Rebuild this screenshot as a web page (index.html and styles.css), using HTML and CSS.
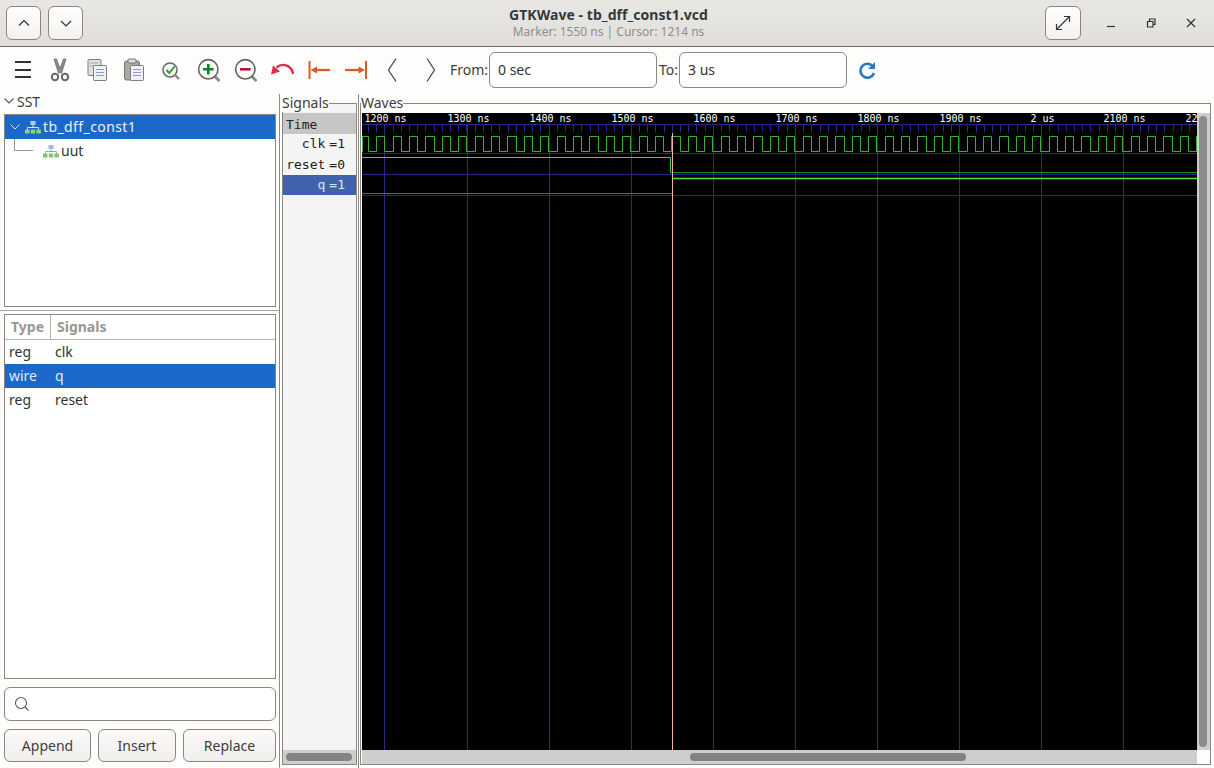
FILE: index.html
```html
<!DOCTYPE html>
<html lang="en">
<head>
  <meta charset="UTF-8">
  <title>GTKWave - tb_dff_const1.vcd</title>
  <link rel="stylesheet" href="styles.css">
</head>
<body>
  <header class="titlebar">
    <div class="titlebar-side">
      <button class="head-btn"><svg width="16" height="16" viewBox="0 0 16 16"><polyline points="3,10.5 8,5.5 13,10.5" class="ic-thin"/></svg></button>
      <button class="head-btn"><svg width="16" height="16" viewBox="0 0 16 16"><polyline points="3,6 8,11 13,6" class="ic-thin"/></svg></button>
    </div>
    <div class="title-text">
      <div class="title-main">GTKWave - tb_dff_const1.vcd</div>
      <div class="title-sub">Marker: 1550 ns | Cursor: 1214 ns</div>
    </div>
    <div class="titlebar-side right">
      <button class="head-btn expand"><svg width="16" height="16" viewBox="0 0 16 16"><path d="M1.5 14.5 L14.5 1.5 M9 1.5 H14.5 V7 M1.5 9 V14.5 H7" class="ic-thin"/></svg></button>
      <div class="win-btn"><svg width="10" height="10" viewBox="0 0 10 10"><path d="M1 8.5 H9" class="ic-win"/></svg></div>
      <div class="win-btn"><svg width="10" height="10" viewBox="0 0 10 10"><path d="M1.5 3.5 H7 V9 H1.5 Z M3.5 3 V1 H9 V6.5 H7.5" class="ic-win"/></svg></div>
      <div class="win-btn"><svg width="10" height="10" viewBox="0 0 10 10"><path d="M1 1 L9 9 M9 1 L1 9" class="ic-win"/></svg></div>
    </div>
  </header>

  <div class="toolbar">
    <div class="tool">
      <svg width="24" height="24" viewBox="0 0 24 24"><path d="M4 4 H20 M4 12 H20 M4 19 H20" fill="none" stroke="#2e3436" stroke-width="2"/></svg>
    </div>
    <div class="tool">
      <svg width="24" height="24" viewBox="0 0 24 24">
        <path d="M6 1 L8.5 1 L13 13 L10.5 15.5 Z M18 1 L15.5 1 L11 13 L13.5 15.5 Z" fill="#8b8e88" stroke="#5f625e" stroke-width=".7"/>
        <circle cx="7" cy="19" r="3.2" fill="none" stroke="#666" stroke-width="2"/>
        <circle cx="17" cy="19" r="3.2" fill="none" stroke="#666" stroke-width="2"/>
      </svg>
    </div>
    <div class="tool">
      <svg width="24" height="24" viewBox="0 0 24 24">
        <rect x="3" y="1.5" width="13" height="16" rx="1" fill="#dfdfdc" stroke="#808080"/>
        <path d="M5 5 H13 M5 8 H13" stroke="#a5a5a5"/>
        <rect x="8.5" y="7.5" width="13" height="15" rx="1" fill="#f0f0f6" stroke="#7f7f7f"/>
        <path d="M11 11.5 H19 M11 14.5 H19 M11 17.5 H19" stroke="#8f9bd0"/>
      </svg>
    </div>
    <div class="tool">
      <svg width="24" height="24" viewBox="0 0 24 24">
        <rect x="2.5" y="3" width="15" height="19" rx="2" fill="#a9a9a4" stroke="#747470"/>
        <rect x="6" y="1" width="8" height="4" rx="1" fill="#dcdcd8" stroke="#747470"/>
        <rect x="8.5" y="7.5" width="13" height="15" rx="1" fill="#f0f0f6" stroke="#7f7f7f"/>
        <path d="M11 11.5 H19 M11 14.5 H19 M11 17.5 H19" stroke="#8f9bd0"/>
      </svg>
    </div>
    <div class="tool">
      <svg width="24" height="24" viewBox="0 0 24 24">
        <path d="M16.5 17.5 L20 21" stroke="#888" stroke-width="2.4"/>
        <circle cx="11" cy="12" r="7" fill="#f6f6f4" stroke="#666" stroke-width="1.5"/>
        <path d="M7.5 12 L10.3 15 L15.5 8.5" fill="none" stroke="#2f9e3f" stroke-width="2"/>
      </svg>
    </div>
    <div class="tool">
      <svg width="24" height="24" viewBox="0 0 24 24">
        <path d="M18.5 18 L23.5 23" stroke="#8a8a8a" stroke-width="3"/>
        <circle cx="12.3" cy="11.3" r="9.7" fill="#fafafa" stroke="#5f635f" stroke-width="1.6"/>
        <path d="M7 11.3 H17.6 M12.3 6 V16.6" stroke="#14812a" stroke-width="2.6"/>
      </svg>
    </div>
    <div class="tool">
      <svg width="24" height="24" viewBox="0 0 24 24">
        <path d="M18.5 18 L23.5 23" stroke="#8a8a8a" stroke-width="3"/>
        <circle cx="12.3" cy="11.3" r="9.7" fill="#fafafa" stroke="#5f635f" stroke-width="1.6"/>
        <path d="M7 11.3 H17.6" stroke="#b3162f" stroke-width="2.6"/>
      </svg>
    </div>
    <div class="tool">
      <svg width="24" height="24" viewBox="0 0 24 24">
        <path d="M23 16 C22 8 13 4 6.5 9.5" fill="none" stroke="#dc2c46" stroke-width="2.4"/>
        <path d="M1 16.5 L3 7.5 L10 13.5 Z" fill="#dc2c46"/>
      </svg>
    </div>
    <div class="tool">
      <svg width="24" height="24" viewBox="0 0 24 24">
        <path d="M2.5 3 V21" stroke="#df5a22" stroke-width="2"/>
        <path d="M8 12 H23" stroke="#df5a22" stroke-width="2.2"/>
        <path d="M3.5 12 L10 8.5 V15.5 Z" fill="#df5a22"/>
      </svg>
    </div>
    <div class="tool">
      <svg width="24" height="24" viewBox="0 0 24 24">
        <path d="M22 3 V21" stroke="#df5a22" stroke-width="2"/>
        <path d="M1 12 H16" stroke="#df5a22" stroke-width="2.2"/>
        <path d="M21 12 L14.5 8.5 V15.5 Z" fill="#df5a22"/>
      </svg>
    </div>
    <div class="tool">
      <svg width="24" height="24" viewBox="0 0 24 24"><polyline points="15,0.5 7.5,12 15,23.5" class="ic-chev"/></svg>
    </div>
    <div class="tool">
      <svg width="24" height="24" viewBox="0 0 24 24"><polyline points="9,0.5 16.5,12 9,23.5" class="ic-chev"/></svg>
    </div>
    <label class="range-label">From:</label>
    <input class="range-input" value="0 sec">
    <label class="range-label to">To:</label>
    <input class="range-input" value="3 us">
    <div class="tool reload">
      <svg width="24" height="24" viewBox="0 0 24 24">
        <path d="M18 8.5 A7 7 0 1 0 19 15" fill="none" stroke="#2b78c4" stroke-width="2.6"/>
        <path d="M20 4 V11 H13 Z" fill="#2b78c4"/>
      </svg>
    </div>
  </div>

  <main class="panes">
    <section class="sst">
      <div class="sst-head">
        <svg width="10" height="6" viewBox="0 0 10 6"><polyline points="0.5,0.5 5,5 9.5,0.5" class="ic-gray"/></svg>
        <span>SST</span>
      </div>
      <div class="tree box">
        <div class="tree-row selected">
          <svg class="tree-chev" width="10" height="6" viewBox="0 0 10 6"><polyline points="0.5,0.5 5,5 9.5,0.5" fill="none" stroke="#cfe0f7" stroke-width="1"/></svg>
          <svg width="16" height="13" viewBox="0 0 16 13">
            <rect x="5.5" y="0" width="5" height="4" fill="#b5cdea"/>
            <path d="M8 4 V6.5 M2.5 8.5 V6.5 H13.5 V8.5" fill="none" stroke="#d8e5f5"/>
            <rect x="0" y="8.5" width="4.5" height="4" fill="#8fd07a"/><rect x="5.7" y="8.5" width="4.5" height="4" fill="#8fd07a"/><rect x="11.4" y="8.5" width="4.5" height="4" fill="#8fd07a"/>
          </svg>
          <span class="tree-top">tb_dff_const1</span>
        </div>
        <div class="tree-row">
          <span class="tree-link"></span>
          <svg width="16" height="13" viewBox="0 0 16 13">
            <rect x="5.5" y="0" width="5" height="4" fill="#9cb9de"/>
            <path d="M8 4 V6.5 M2.5 8.5 V6.5 H13.5 V8.5" fill="none" stroke="#9aa"/>
            <rect x="0" y="8.5" width="4.5" height="4" fill="#86c46f"/><rect x="5.7" y="8.5" width="4.5" height="4" fill="#86c46f"/><rect x="11.4" y="8.5" width="4.5" height="4" fill="#86c46f"/>
          </svg>
          <span>uut</span>
        </div>
      </div>
      <div class="pane-grip"></div>
      <div class="list box">
        <div class="list-row list-head"><span>Type</span><span>Signals</span></div>
        <div class="list-row"><span>reg</span><span>clk</span></div>
        <div class="list-row selected"><span>wire</span><span>q</span></div>
        <div class="list-row"><span>reg</span><span>reset</span></div>
      </div>
      <div class="search">
        <svg width="16" height="16" viewBox="0 0 16 16"><circle cx="7" cy="7" r="5.5" class="ic-gray"/><path d="M11 11 L14.5 14.5" class="ic-gray"/></svg>
      </div>
      <div class="actions">
        <button class="action-btn">Append</button>
        <button class="action-btn">Insert</button>
        <button class="action-btn">Replace</button>
      </div>
    </section>

    <div class="divider"></div>

    <fieldset class="frame signals">
      <legend>Signals</legend>
      <div class="sig-list">
        <div class="sig-row time"><span>Time</span></div>
        <div class="sig-row"><span>clk</span><span class="sig-val">=1</span></div>
        <div class="sig-row"><span>reset</span><span class="sig-val">=0</span></div>
        <div class="sig-row active"><span>q</span><span class="sig-val">=1</span></div>
      </div>
      <div class="hscroll"><div class="thumb sig-thumb"></div></div>
    </fieldset>

    <div class="divider"></div>

    <fieldset class="frame waves">
      <legend>Waves</legend>
      <div class="wave-body">
        <svg id="wave" class="wave" width="835" height="637" viewBox="0 0 835 637"></svg>
        <div class="vscroll"><div class="vthumb"></div></div>
      </div>
      <div class="wave-foot">
        <div class="hscroll wave-hscroll"><div class="thumb wave-thumb"></div></div>
        <div class="corner"></div>
      </div>
    </fieldset>
  </main>

  <script src="wave.js"></script>
</body>
</html>
```

FILE: styles.css
```css
html, body {
  height: 100%;
}

body {
  margin: 0;
  display: flex;
  flex-direction: column;
  overflow: hidden;
  background: #fdfdfc;
  color: #2e3436;
  font-family: "Noto Sans", sans-serif;
  font-size: 14px;
}

button {
  font: inherit;
  color: inherit;
}

svg {
  display: block;
  flex: none;
}

.ic-thin { fill: none; stroke: #2e3436; stroke-width: 1.2; }
.ic-win { fill: none; stroke: #2e3436; stroke-width: 1.2; }
.ic-chev { fill: none; stroke: #4a4a4a; stroke-width: 1.3; }
.ic-gray { fill: none; stroke: #555; stroke-width: 1.1; }

/* title bar */
.titlebar {
  display: flex;
  align-items: center;
  height: 46px;
  flex: none;
  padding: 0 3px 0 6px;
  background: linear-gradient(#e9e7e4, #e1dfdc);
  border-bottom: 1px solid #6d6762;
}

.titlebar-side {
  flex: 1 1 0;
  display: flex;
  align-items: center;
  gap: 7px;
}

.titlebar-side.right {
  justify-content: flex-end;
  gap: 0;
}

.head-btn {
  width: 35px;
  height: 34px;
  padding: 0;
  display: flex;
  align-items: center;
  justify-content: center;
  border: 1px solid #8c8680;
  border-radius: 6px;
  background: linear-gradient(#ffffff, #f3f1ef);
}

.head-btn.expand {
  width: 36px;
  margin-right: 10px;
}

.win-btn {
  width: 40px;
  height: 34px;
  display: flex;
  align-items: center;
  justify-content: center;
}

.title-text {
  text-align: center;
  white-space: nowrap;
}

.title-main {
  font-size: 14px;
  font-weight: 700;
  line-height: 17px;
  letter-spacing: .05px;
  color: #33383a;
}

.title-sub {
  margin-top: 1px;
  font-size: 12px;
  line-height: 16px;
  color: #8e8e8c;
}

/* toolbar */
.toolbar {
  box-sizing: border-box;
  display: flex;
  align-items: center;
  flex: none;
  height: 47px;
  padding: 0 0 2px 4px;
}

.tool {
  width: 37px;
  display: flex;
  justify-content: center;
}

.tool.reload {
  margin-left: 1px;
}

.range-label {
  margin-left: 2px;
  width: 39px;
  font-size: 14px;
  color: #3d3d3d;
}

.range-label.to {
  width: 20px;
}

.range-input {
  box-sizing: border-box;
  width: 168px;
  height: 36px;
  padding: 0 8px;
  border: 1px solid #8c8680;
  border-radius: 6px;
  background: #fff;
  color: #2e3436;
  font-family: inherit;
  font-size: 14px;
}

/* panes */
.panes {
  flex: 1;
  display: flex;
  min-height: 0;
}

.divider {
  flex: none;
  width: 1px;
  background: #8f8a84;
}

.box {
  border: 1px solid #8c8680;
  background: #fff;
}

.sst {
  box-sizing: border-box;
  width: 279px;
  flex: none;
  display: flex;
  flex-direction: column;
  padding: 0 3px 6px 4px;
}

.sst-head {
  box-sizing: border-box;
  display: flex;
  align-items: center;
  gap: 3px;
  height: 20px;
  padding-bottom: 6px;
  color: #3d3d3d;
}

.tree {
  height: 191px;
  flex: none;
}

.tree-row {
  display: flex;
  align-items: center;
  height: 24px;
}

.tree-row span {
  margin-bottom: 1px;
}

.tree-row.selected {
  background: #1c68c9;
  color: #eaf2fd;
}

.tree-chev {
  margin: 0 5px;
}

.tree-row svg + span {
  margin-left: 2px;
}

.tree-top {
  letter-spacing: .4px;
}

.tree-link {
  align-self: flex-start;
  box-sizing: border-box;
  width: 19px;
  height: 12px;
  margin: 0 10px 0 9px;
  border-left: 1px solid #9a9a9a;
  border-bottom: 1px solid #9a9a9a;
}

.pane-grip {
  flex: none;
  height: 7px;
  margin: 0 -3px 0 -4px;
  background: linear-gradient(#fdfdfc 3px, #a8a3a0 3px, #a8a3a0 4px, #fdfdfc 4px);
}

.list {
  flex: 1;
  min-height: 0;
}

.list-row {
  box-sizing: border-box;
  display: grid;
  grid-template-columns: 50px 1fr;
  align-items: center;
  height: 24px;
  padding-bottom: 2px;
}

.list-row span {
  padding-left: 4px;
}

.list-row span + span {
  padding-left: 0;
}

.list-row.selected {
  background: #1c68c9;
  color: #dfeafb;
}

.list-head {
  grid-template-columns: 46px 1fr;
  height: 25px;
  padding-bottom: 0;
  border-bottom: 1px solid #b5b2ae;
  color: #979797;
  font-weight: 700;
}

.list-head span {
  padding-left: 6px;
  line-height: 24px;
  border-right: 1px solid #b5b2ae;
}

.list-head span + span {
  padding-left: 6px;
  border-right: 0;
}

.search {
  flex: none;
  box-sizing: border-box;
  height: 34px;
  margin-top: 8px;
  padding-left: 9px;
  display: flex;
  align-items: center;
  border: 1px solid #8c8680;
  border-radius: 6px;
  background: #fff;
}

.actions {
  flex: none;
  display: grid;
  grid-template-columns: 87px 78px 1fr;
  gap: 7px;
  margin-top: 8px;
}

.action-btn {
  height: 33px;
  padding: 0;
  border: 1px solid #8c8680;
  border-radius: 6px;
  background: linear-gradient(#fbfaf9, #f1efed);
  color: #3d3d3d;
}

/* signal and wave frames */
.frame {
  box-sizing: border-box;
  min-width: 0;
  margin: 0 0 3px;
  padding: 1px 0 0;
  display: flex;
  flex-direction: column;
  border: 1px solid #8c8680;
}

.frame legend {
  padding: 0;
  height: 18px;
  line-height: 18px;
  color: #3d3d3d;
}

.signals {
  flex: none;
  width: 75px;
  margin-left: 2px;
  margin-right: 1px;
  background: #f4f4f4;
}

.signals legend {
  margin-left: -1px;
  background: #fdfdfc;
}

.sig-list {
  flex: 1;
  font-family: "DejaVu Sans Mono", monospace;
  font-size: 13px;
}

.sig-row {
  display: flex;
  justify-content: flex-end;
  align-items: center;
  height: 20.5px;
  padding-right: 11px;
  color: #222;
}

.sig-val {
  margin-left: 4px;
}

.sig-row.time {
  justify-content: flex-start;
  padding: 2px 0 0 3px;
  height: 18.5px;
  background: #c6c6c6;
}

.sig-row.active {
  background: #3f63ad;
  color: #d8e4ff;
}

.hscroll {
  flex: none;
  height: 14px;
  display: flex;
  align-items: center;
  background: #cecece;
}

.thumb {
  height: 8px;
  border-radius: 4px;
  background: #808484;
}

.sig-thumb {
  width: 66px;
  margin-left: 3px;
}

.waves {
  flex: 1;
  margin-left: 1px;
  margin-right: 3px;
}

.wave-body {
  flex: 1;
  min-height: 0;
  display: flex;
  padding-left: 1px;
}

.wave {
  flex: none;
  background: #000;
}

.vscroll {
  flex: 1;
  padding: 3px 3px 3px 2px;
  background: #cecece;
}

.vthumb {
  height: 100%;
  border-radius: 4px;
  background: #8b8b8b;
}

.wave-foot {
  flex: none;
  display: flex;
  padding-left: 1px;
}

.wave-hscroll {
  width: 835px;
}

.wave-thumb {
  width: 276px;
  margin-left: 328px;
}

.corner {
  flex: 1;
  background: #fdfdfc;
}
```

FILE: wave.js
```js
const wave = document.getElementById("wave");
const NS = "http://www.w3.org/2000/svg";

const GRID = "#282886";
const STEP = 82.1;    // px per 100 ns
const FIRST = 22.9;   // x of the 1200 ns line
const END = 835;

function add(tag, attrs, text) {
  const el = document.createElementNS(NS, tag);
  for (const k in attrs) el.setAttribute(k, attrs[k]);
  if (text) el.textContent = text;
  wave.appendChild(el);
}

function line(d, color, width) {
  add("path", { d: d, fill: "none", stroke: color, "stroke-width": width || 1 });
}

// snap to the middle of a pixel so lines stay crisp
function snap(x) {
  return Math.floor(x) + 0.5;
}

// horizontal row lines
[11.5, 40.5, 61.5, 82.5].forEach(y => line("M0 " + y + " H" + END, GRID));

// minor ticks, ten to a major step
let ticks = "";
for (let x = FIRST - STEP / 5; x < END; x += STEP / 10) {
  ticks += "M" + snap(x) + " 11.5 V19.5 ";
}
line(ticks, GRID);

// major lines and their labels
const labels = ["1200 ns", "1300 ns", "1400 ns", "1500 ns", "1600 ns", "1700 ns", "1800 ns", "1900 ns", "2 us", "2100 ns", "2200 ns"];
labels.forEach((text, i) => {
  const x = snap(FIRST + i * STEP);
  line("M" + x + " 11.5 V637", GRID);
  add("text", { x: x + 1, y: 9, "text-anchor": "middle", fill: "#fff", "font-family": "DejaVu Sans Mono", "font-size": 10 }, text);
});

// clk, 20 ns period
let clk = "M0 23.5";
for (let x = 6.5 - 16.4; x < END; x += 16.4) {
  clk += " H" + snap(Math.max(x, 0)) + " V38.5 H" + snap(x + 8.2) + " V23.5";
}
clk += " H" + END;
line(clk, "#36b436");

// reset and q
line("M0 44.5 H308.5 V59.5", "#44d044");
line("M308.5 59.5 H" + END, "#238c23");
line("M0 80.5 H310.5", "#238c23");
line("M310.5 65.5 H" + END, "#55e045", 1.5);

// marker
line("M310.5 20 V637", "#f4b3a2");
```
